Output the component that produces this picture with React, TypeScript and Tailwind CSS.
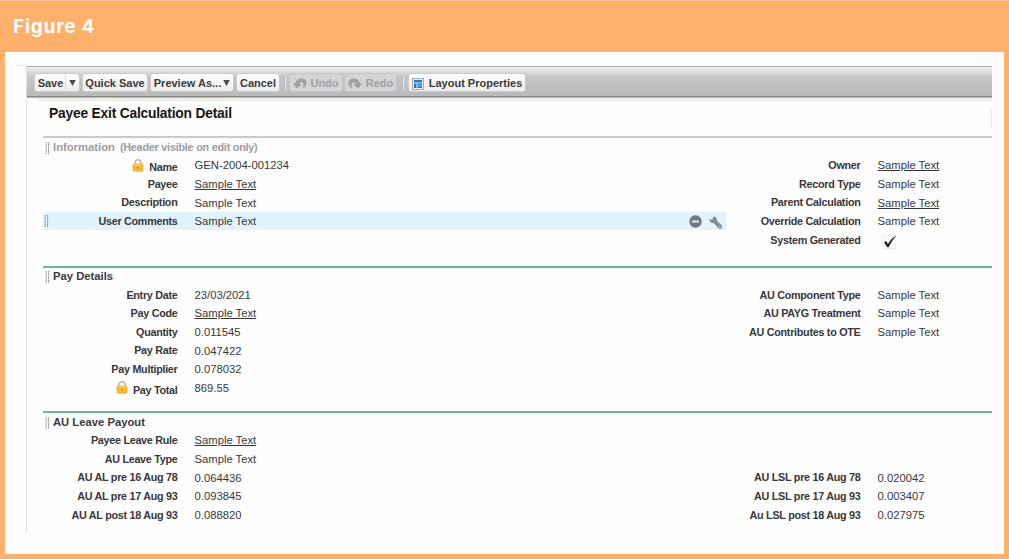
import type { ReactNode } from 'react';

type Field = {
  label: string;
  value?: string;
  link?: boolean;
  locked?: boolean;
  checked?: boolean;
  active?: boolean;
};

type SectionData = {
  title: string;
  note?: string;
  className: string;
  left: Field[];
  right: (Field | null)[];
};

const sections: SectionData[] = [
  {
    title: 'Information',
    note: '(Header visible on edit only)',
    className: 'h-[129.5px] border-[#cbcbcb] text-[#9c9c9c]',
    left: [
      { label: 'Name', value: 'GEN-2004-001234', locked: true },
      { label: 'Payee', value: 'Sample Text', link: true },
      { label: 'Description', value: 'Sample Text' },
      { label: 'User Comments', value: 'Sample Text', active: true },
    ],
    right: [
      { label: 'Owner', value: 'Sample Text', link: true },
      { label: 'Record Type', value: 'Sample Text' },
      { label: 'Parent Calculation', value: 'Sample Text', link: true },
      { label: 'Override Calculation', value: 'Sample Text' },
      { label: 'System Generated', checked: true },
    ],
  },
  {
    title: 'Pay Details',
    className: 'h-[145.5px] border-[#6cb797] text-[#3a3a3a]',
    left: [
      { label: 'Entry Date', value: '23/03/2021' },
      { label: 'Pay Code', value: 'Sample Text', link: true },
      { label: 'Quantity', value: '0.011545' },
      { label: 'Pay Rate', value: '0.047422' },
      { label: 'Pay Multiplier', value: '0.078032' },
      { label: 'Pay Total', value: '869.55', locked: true },
    ],
    right: [
      { label: 'AU Component Type', value: 'Sample Text' },
      { label: 'AU PAYG Treatment', value: 'Sample Text' },
      { label: 'AU Contributes to OTE', value: 'Sample Text' },
    ],
  },
  {
    title: 'AU Leave Payout',
    className: 'h-[122px] border-[#6fb5a0] text-[#3a3a3a]',
    left: [
      { label: 'Payee Leave Rule', value: 'Sample Text', link: true },
      { label: 'AU Leave Type', value: 'Sample Text' },
      { label: 'AU AL pre 16 Aug 78', value: '0.064436' },
      { label: 'AU AL pre 17 Aug 93', value: '0.093845' },
      { label: 'AU AL post 18 Aug 93', value: '0.088820' },
    ],
    right: [
      null,
      null,
      { label: 'AU LSL pre 16 Aug 78', value: '0.020042' },
      { label: 'AU LSL pre 17 Aug 93', value: '0.003407' },
      { label: 'Au LSL post 18 Aug 93', value: '0.027975' },
    ],
  },
];

function LockIcon() {
  return (
    <svg className="mr-[5px] -mt-[4px] h-[13px] w-[12px]" viewBox="0 0 12 13">
      <path d="M3 6V3.7a3 3 0 0 1 6 0V6" fill="none" stroke="#b5b3aa" strokeWidth="1.4" />
      <rect x="1" y="5" width="10" height="7.2" rx="1" fill="#f7be2e" stroke="#dba233" strokeWidth=".7" />
      <path d="M2 6h8" stroke="#ffe184" strokeWidth=".9" />
      <path d="M6 7.4v2.2" stroke="#a87a20" strokeWidth="1.1" />
    </svg>
  );
}

function Grip() {
  return (
    <svg className="h-[12px] w-[5px] shrink-0" viewBox="0 0 5 12">
      <path d="M1.2 0v12M3.6 0v12" stroke="#888" strokeWidth="1" strokeDasharray="1.3 .5" />
    </svg>
  );
}

function CheckIcon() {
  return (
    <svg className="ml-[4px] mt-[3px] h-[14px] w-[16px]" viewBox="0 0 16 14">
      <rect x=".5" y=".5" width="13" height="13" fill="#f9f9f9" stroke="#eeeeee" />
      <path d="M2 7.2 4 6l2 3.1C8 5.4 10.5 2.6 14.4.8 11 4.3 8.7 8 6.7 12.3H5.2Z" fill="#202020" />
    </svg>
  );
}

function UndoIcon({ flip }: { flip?: boolean }) {
  return (
    <svg
      className={`mt-px h-[11px] w-[14px] shrink-0 ${flip ? '-scale-x-100' : ''}`}
      viewBox="0 0 14 11"
    >
      <path
        d="M0 5.6 2.2 5C3.2 2 5.8.3 8.6.5c3.3.2 5.2 2.4 5 4.8-.2 2.3-1.6 4-4 4.9 1.1-2 1.3-5.4-.8-5.9-1.2-.3-2 .2-2.5 1.3l2.4.4L3.9 10.5Z"
        fill="#a0a0a0"
      />
    </svg>
  );
}

function Divider() {
  return <div className="h-[14px] w-[2px] border-l border-[#b4b5b7] bg-[#eeeeee]" />;
}

function ToolButton({
  className,
  disabled,
  children,
}: {
  className: string;
  disabled?: boolean;
  children: ReactNode;
}) {
  return (
    <button
      className={`flex h-[19px] shrink-0 items-center justify-center whitespace-nowrap rounded-[3px] border pt-px text-[11px] font-bold leading-none ${
        disabled
          ? 'border-[#c3c4c5] bg-[#d3d4d5] text-[#a0a0a0]'
          : 'border-[#c9cacb] bg-gradient-to-b from-white to-[#ececec] text-[#3a3a3a]'
      } ${className}`}
    >
      {children}
    </button>
  );
}

function Arrow({ className }: { className: string }) {
  return (
    <svg className={`-mt-px h-[6px] w-[7px] shrink-0 ${className}`} viewBox="0 0 7 6">
      <path d="M.2 0h6.6L3.5 6Z" fill="#4a4a4a" />
    </svg>
  );
}

function Toolbar() {
  return (
    <div className="h-[35px] border-t border-[#a8a8a8]">
      <div className="flex h-[30px] items-center border-b border-[#858585] bg-gradient-to-b from-[#f0f0f0] via-[#c5c6c7] via-35% to-[#b8b9bb] pl-[7px] pt-[2px]">
        <ToolButton className="w-[46px]">
          <span>Save</span>
          <span className="ml-[2px] -mt-px h-[15px] border-l border-[#dedede]" />
          <Arrow className="ml-[3px]" />
        </ToolButton>
        <ToolButton className="ml-[2px] w-[66px]">Quick Save</ToolButton>
        <ToolButton className="ml-[2px] w-[84px]">
          <span>Preview As...</span>
          <Arrow className="ml-[2px]" />
        </ToolButton>
        <ToolButton className="ml-[2px] mr-[4px] w-[44px]">Cancel</ToolButton>
        <Divider />
        <ToolButton disabled className="ml-[3px] w-[54px] gap-[3px]">
          <UndoIcon />
          Undo
        </ToolButton>
        <ToolButton disabled className="ml-[1px] mr-[5px] w-[53px] gap-[4px]">
          <UndoIcon flip />
          Redo
        </ToolButton>
        <Divider />
        <ToolButton className="ml-[4px] w-[118px] gap-[5px]">
          <svg className="mt-px h-[12px] w-[12px]" viewBox="0 0 12 12">
            <rect x=".5" y=".5" width="11" height="11" fill="#e3edf6" stroke="#a3adb7" />
            <path d="M2 2h8v2.5H2zM2 5.5h2.5V10H2zM5.5 5.5H10V10H5.500z" fill="#2a75bb" />
            <path d="M6 7.7h4" stroke="#d8e8f7" strokeWidth=".7" />
          </svg>
          Layout Properties
        </ToolButton>
      </div>
      <div className="h-[1px] bg-[#b6b6b4]" />
      <div className="ml-[11px] h-[3px] bg-[#f0f0eb]" />
    </div>
  );
}

function FieldRow({ field }: { field: Field | null }) {
  if (!field) return <div className="h-[18.6px]" />;

  return (
    <div className={`flex h-[18.6px] items-center ${field.active ? 'bg-[#e1f4fe]' : ''}`}>
      <div className="flex w-[134.5px] shrink-0 items-center">
        {field.active && (
          <span className="ml-px flex">
            <Grip />
          </span>
        )}
        <div
          className={`ml-auto flex items-center whitespace-nowrap text-[10.8px] font-bold tracking-[-0.29px] text-[#383838] ${
            field.locked ? 'pt-[4px]' : ''
          }`}
        >
          {field.locked && <LockIcon />}
          {field.label}
        </div>
      </div>
      <div className="ml-[17px] whitespace-nowrap pt-px text-[11.25px] text-[#383838]">
        {field.checked ? (
          <CheckIcon />
        ) : (
          <span className={field.link ? 'underline underline-offset-[1px]' : ''}>{field.value}</span>
        )}
      </div>
      {field.active && (
        <div className="ml-auto mr-[3px] flex items-center gap-[7px]">
          <svg className="h-[13px] w-[13px]" viewBox="0 0 13 13">
            <circle cx="6.5" cy="6.5" r="6.2" fill="#727980" />
            <path d="M3 6.5h7" stroke="#e7edf1" strokeWidth="2" />
          </svg>
          <svg className="mt-[2px] h-[13px] w-[14px]" viewBox="0 0 14 13">
            <path
              d="M4.2.4 3.8 3 2.500 3.7.5 2.500C-.1 5.1 1.900 7.500 4.600 7.100L9.600 12.200c1.700 1.400 4.700-.5 3.200-2.800L8 4.800C8.400 2.300 6.800.3 4.200.4Z"
              fill="#858b91"
            />
            <circle cx="11" cy="10.7" r=".8" fill="#d6e3eb" />
          </svg>
        </div>
      )}
    </div>
  );
}

function Section({ section }: { section: SectionData }) {
  return (
    <section className={`border-t-2 ${section.className}`}>
      <h2 className="flex h-[18px] items-center pl-[2px] pt-px text-[11.25px] font-bold leading-none">
        <Grip />
        <span className="ml-[3px]">{section.title}</span>
        {section.note && (
          <span className="ml-[5px] text-[10.8px] tracking-[-0.22px]">{section.note}</span>
        )}
      </h2>
      <div className="grid grid-cols-[683px_266px]">
        <div>
          {section.left.map((field) => (
            <FieldRow key={field.label} field={field} />
          ))}
        </div>
        <div>
          {section.right.map((field, index) => (
            <FieldRow key={index} field={field} />
          ))}
        </div>
      </div>
    </section>
  );
}

export default function App() {
  return (
    <div className="flex h-[559px] w-[1009px] flex-col overflow-hidden border-t border-[#ffc797] bg-[#ffb06b] font-['Liberation_Sans',Arial,sans-serif]">
      <header className="flex h-[51px] shrink-0 items-center pl-[13px] pt-px">
        <h1 className="font-['Inter','Liberation_Sans',sans-serif] text-[19px] font-bold tracking-[0.75px] text-white">
          Figure 4
        </h1>
      </header>

      <main className="ml-[5px] h-[502px] w-[999px] bg-[#fefefe] pl-[11px] pt-[13px]">
        <div className="flex">
          <div className="h-px w-[10px] bg-[#e6e6e6]" />
          <div className="h-[468px] w-[966px] border-l border-[#e0e0e0] pt-px">
            <Toolbar />
            <div className="flex h-[35px] items-center pl-[22px] pb-[9px]">
              <h2 className="text-[13.8px] font-bold tracking-[-0.2px] text-[#161616]">
                Payee Exit Calculation Detail
              </h2>
              <div className="ml-auto mt-[10px] h-[20px] w-px bg-[#ececec]" />
            </div>
            <div className="pl-[16px]">
              {sections.map((section) => (
                <Section key={section.title} section={section} />
              ))}
            </div>
          </div>
        </div>
      </main>
    </div>
  );
}
